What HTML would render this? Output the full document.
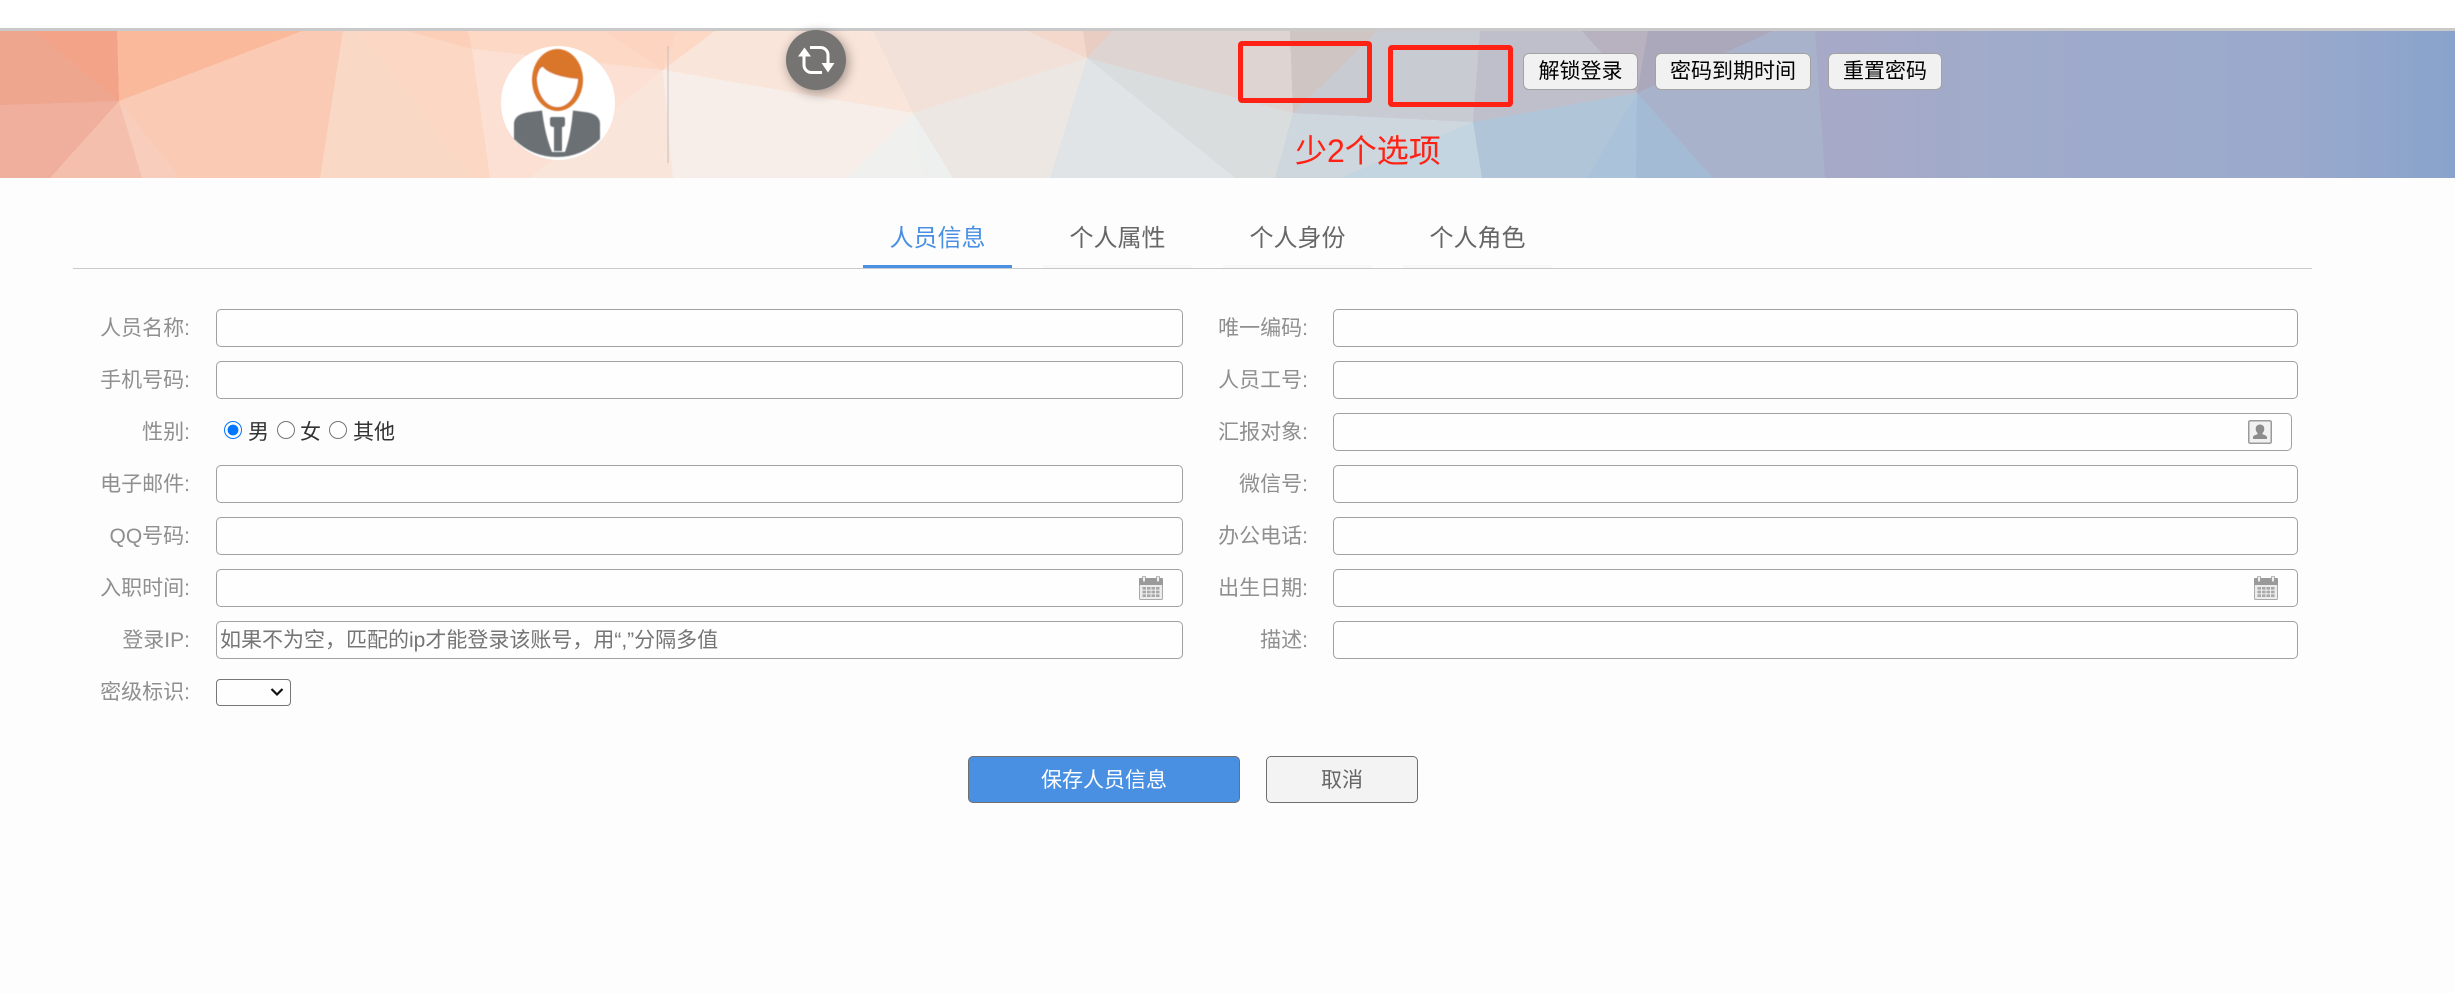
<!DOCTYPE html>
<html lang="zh-CN">
<head>
<meta charset="utf-8">
<title>人员信息</title>
<style>
html,body{margin:0;padding:0;width:2455px;height:993px;overflow:hidden;background:#fdfdfd;font-family:"Liberation Sans","Noto Sans CJK SC",sans-serif;}
*{box-sizing:border-box;}
.abs{position:absolute;}
#top{left:0;top:0;width:2455px;height:28px;background:#fff;}
#line{left:0;top:28px;width:2455px;height:3px;background:#c9c9c9;}
svg{display:block;}
.hbtn{position:absolute;top:53px;height:37px;background:#f1f1f1;border:1px solid #a3a3a3;border-radius:6px;color:#000;font:21px/35px "Liberation Sans","Noto Sans CJK SC",sans-serif;text-align:center;padding:0;}
.red{position:absolute;border:5px solid #ff2214;border-radius:4px;}
#note{left:1295px;top:129px;height:44px;line-height:44px;font-size:32px;color:#ff2214;white-space:nowrap;}
.tab{position:absolute;top:216px;width:149px;height:52px;line-height:46px;text-align:center;font-size:24px;color:#666;border-bottom:3px solid #f8f8f8;}
.tab.on{color:#4a90e2;border-bottom-color:#4a90e2;}
#rule{left:73px;top:268px;width:2239px;height:1px;background:#cacaca;}
.lb{position:absolute;height:38px;line-height:40px;font-size:21px;color:#8f8f8f;text-align:right;white-space:nowrap;}
.lb.l{left:60px;width:130px;}
.lb.r{left:1170px;width:138px;}
input.t{position:absolute;height:38px;border:1.5px solid #a0a0a0;border-radius:5px;background:#fefefe;padding:2px 3px 0;margin:0;font:21px "Liberation Sans","Noto Sans CJK SC",sans-serif;outline:none;}
input.t::placeholder{color:#757575;opacity:1;}
input.t.c1{left:216px;width:967px;}
input.t.c2{left:1333px;width:965px;}
.rd{position:absolute;top:421px;width:18px;height:18px;margin:0;}
.rt{position:absolute;top:413px;height:38px;line-height:40px;font-size:21px;color:#333;white-space:nowrap;}
select{position:absolute;left:216px;top:679px;width:75px;height:27px;margin:0;background:#fefefe;border:1.5px solid #767676;border-radius:4px;font-size:20px;appearance:none;-webkit-appearance:none;}
.btn{position:absolute;top:756px;height:47px;border-radius:5px;font:21px/47px "Liberation Sans","Noto Sans CJK SC",sans-serif;text-align:center;padding:0;border:1.5px solid #6f6f6f;}
#save{left:968px;width:272px;background:#4a90e2;color:#fff;}
#cancel{left:1266px;width:152px;background:#f3f3f3;color:#666;}
</style>
</head>
<body>
<div class="abs" id="top"></div>

<svg class="abs" style="left:0;top:31px" width="2455" height="147" viewBox="0 31 2455 147">
<defs>
<linearGradient id="g" x1="0" x2="1" y1="0" y2="0"><stop offset="0" stop-color="#a7a9c7"/><stop offset=".3" stop-color="#a0abcb"/><stop offset=".75" stop-color="#9aa9cc"/><stop offset="1" stop-color="#88a3cb"/></linearGradient>
<filter id="av" x="-5%" y="-5%" width="110%" height="110%"><feGaussianBlur stdDeviation=".5"/></filter>
</defs>
<g shape-rendering="crispEdges">
<rect x="0" y="31" width="2455" height="147" fill="#f8eee9"/>
<polygon points="0,31 33,31 119,101 0,105" fill="#eea78e"/>
<polygon points="33,31 117,31 119,101" fill="#f3a488"/>
<polygon points="117,31 302,31 119,101" fill="#fab99a"/>
<polygon points="119,101 302,31 343,31 320,178 180,178" fill="#fbcab4"/>
<polygon points="119,101 180,178 142,178" fill="#f8cdbb"/>
<polygon points="119,101 142,178 50,178" fill="#f5bfad"/>
<polygon points="0,105 119,101 50,178 0,178" fill="#f0ae9c"/>
<polygon points="343,31 360,31 473,178 320,178" fill="#f9d9c5"/>
<polygon points="360,31 407,31 472,49 490,178 473,178" fill="#fcd7c3"/>
<polygon points="407,31 468,31 472,49" fill="#fccfb9"/>
<polygon points="468,31 715,31 663,70 472,49" fill="#fdd8c4"/>
<polygon points="603,31 677,31 663,70" fill="#fdd4c0"/>
<polygon points="472,49 663,70 530,178 490,178" fill="#fbe0d3"/>
<polygon points="663,70 530,178 673,178" fill="#fae5db"/>
<polygon points="663,70 913,113 847,178 673,178" fill="#f8eee9"/>
<polygon points="663,70 715,31 873,31 913,113" fill="#fae5da"/>
<polygon points="873,31 1027,31 1087,58 913,113" fill="#f2e1d9"/>
<polygon points="1027,31 1083,31 1087,58" fill="#f3d8cb"/>
<polygon points="1083,31 1112,31 1087,58" fill="#e9cdc2"/>
<polygon points="913,113 847,178 923,178" fill="#f0f0ee"/>
<polygon points="913,113 923,178 953,178" fill="#eef0ef"/>
<polygon points="913,113 1087,58 1050,178 953,178" fill="#ece7e3"/>
<polygon points="1087,58 1235,178 1050,178" fill="#e0e4e6"/>
<polygon points="1087,58 1293,113 1275,178 1235,178" fill="#d9dddd"/>
<polygon points="1112,31 1290,31 1293,113 1087,58" fill="#ded4d1"/>
<polygon points="1290,31 1378,31 1293,113" fill="#cfc6c3"/>
<polygon points="1378,31 1480,31 1473,122 1293,113" fill="#c8cbd1"/>
<polygon points="1293,113 1473,122 1340,178 1275,178" fill="#ced6de"/>
<polygon points="1473,122 1482,178 1340,178" fill="#c2d5e1"/>
<polygon points="1480,31 1582,31 1637,93 1473,122" fill="#bfbfcb"/>
<polygon points="1582,31 1648,31 1637,93" fill="#b8b2c0"/>
<polygon points="1648,31 1773,31 1637,93" fill="#aca8bc"/>
<polygon points="1473,122 1637,93 1587,178 1482,178" fill="#b1c5d8"/>
<polygon points="1637,93 1636,178 1587,178" fill="#aac2da"/>
<polygon points="1637,93 1713,178 1636,178" fill="#a4bbd5"/>
<polygon points="1773,31 1815,31 1825,178 1713,178 1637,93" fill="#a8b2cb"/>
<polygon points="1815,31 2455,31 2455,178 1825,178" fill="url(#g)"/>
</g>
<line x1="668" y1="46" x2="668" y2="163" stroke="#c4c0bd" stroke-width="1"/>
<!-- avatar -->
<circle cx="558" cy="103" r="57" fill="#fff"/>
<g filter="url(#av)">
<path d="M514 124 Q514 115 527 112.500 L542 110.500 Q545 135 552 152 L565 152 Q571 135 573 110.500 L588 112.500 Q600 115 600 124 V139 Q582 157 557 157 Q532 157 514 139 Z" fill="#6b7073"/>
<path d="M550 119 Q550 117 552 117 H563 Q565 117 565 119 V124 Q565 127 562 127 L562 151 H554 L554 127 Q550 127 550 124 Z" fill="#6b7073"/>
<ellipse cx="557.500" cy="80" rx="25.500" ry="31" fill="#da7629"/>
<path d="M537 78 C538 72 540 67 543 67 C548 74 565 78 578 79 C577 96 568 107 557.500 107 C546 107 537 94 537 78Z" fill="#fff"/>
</g>
</svg>

<div class="abs" id="line"></div>

<!-- refresh button -->
<svg class="abs" style="left:766px;top:0;overflow:visible" width="100" height="120" viewBox="766 0 100 120">
<defs><filter id="s" x="-50%" y="-50%" width="200%" height="200%"><feGaussianBlur stdDeviation="6"/></filter></defs>
<circle cx="818" cy="63" r="30" fill="#000" opacity=".38" filter="url(#s)"/>
<circle cx="816" cy="60" r="30" fill="#767472"/>
<path d="M804 56 V65 a7.500 7.500 0 0 0 7.500 7.500 H822" fill="none" stroke="#fff" stroke-width="3"/>
<polygon points="798,56.500 804.500,47.500 811,56.500" fill="#fff"/>
<path d="M828 63 V55 a7.500 7.500 0 0 0 -7.500 -7.500 H810" fill="none" stroke="#fff" stroke-width="3"/>
<polygon points="821.500,63 834.500,63 828,72.500" fill="#fff"/>
</svg>

<div class="red" style="left:1238px;top:41px;width:134px;height:62px"></div>
<div class="red" style="left:1388px;top:45px;width:125px;height:62px"></div>
<button class="hbtn" style="left:1523px;width:115px">解锁登录</button>
<button class="hbtn" style="left:1655px;width:156px">密码到期时间</button>
<button class="hbtn" style="left:1828px;width:114px">重置密码</button>
<div class="abs" id="note">少2个选项</div>

<div class="tab on" style="left:863px">人员信息</div>
<div class="tab" style="left:1043px">个人属性</div>
<div class="tab" style="left:1223px">个人身份</div>
<div class="tab" style="left:1403px">个人角色</div>
<div class="abs" id="rule"></div>

<!-- left column -->
<div class="lb l" style="top:309px">人员名称:</div><input class="t c1" style="top:309px">
<div class="lb l" style="top:361px">手机号码:</div><input class="t c1" style="top:361px">
<div class="lb l" style="top:413px">性别:</div>
<input class="rd" type="radio" name="sex" checked style="left:224px">
<span class="rt" style="left:248px">男</span>
<input class="rd" type="radio" name="sex" style="left:277px">
<span class="rt" style="left:300px">女</span>
<input class="rd" type="radio" name="sex" style="left:329px">
<span class="rt" style="left:353px">其他</span>
<div class="lb l" style="top:465px">电子邮件:</div><input class="t c1" style="top:465px">
<div class="lb l" style="top:517px">QQ号码:</div><input class="t c1" style="top:517px">
<div class="lb l" style="top:569px">入职时间:</div><input class="t c1" style="top:569px">
<div class="lb l" style="top:621px">登录IP:</div><input class="t c1" style="top:621px" placeholder="如果不为空，匹配的ip才能登录该账号，用“,”分隔多值">
<div class="lb l" style="top:673px">密级标识:</div><select><option></option></select>
<svg class="abs" style="left:270px;top:686px" width="14" height="12" viewBox="0 0 14 12"><path d="M1.500 3 L7 8.500 L12.500 3" fill="none" stroke="#111" stroke-width="2.200"/></svg>

<!-- right column -->
<div class="lb r" style="top:309px">唯一编码:</div><input class="t c2" style="top:309px">
<div class="lb r" style="top:361px">人员工号:</div><input class="t c2" style="top:361px">
<div class="lb r" style="top:413px">汇报对象:</div><input class="t c2" style="top:413px;width:959px">
<div class="lb r" style="top:465px">微信号:</div><input class="t c2" style="top:465px">
<div class="lb r" style="top:517px">办公电话:</div><input class="t c2" style="top:517px">
<div class="lb r" style="top:569px">出生日期:</div><input class="t c2" style="top:569px">
<div class="lb r" style="top:621px">描述:</div><input class="t c2" style="top:621px">

<!-- user icon -->
<svg class="abs" style="left:2248px;top:420px" width="24" height="24" viewBox="0 0 24 24">
<rect x=".75" y=".75" width="22.500" height="22.500" rx="1.500" fill="#f1f1f1" stroke="#9a9a9a" stroke-width="1.500"/>
<path d="M12 4.500c2.800 0 4.300 2 4.300 4.300 0 1.800-.8 3.400-1.800 4.200v1.300c2.200.7 4.300 1.500 4.500 2.700V19H5v-2c.2-1.200 2.300-2 4.500-2.700V13c-1-.8-1.800-2.400-1.800-4.200 0-2.300 1.500-4.300 4.300-4.300z" fill="#8c8c8c"/>
</svg>

<!-- calendar icons -->
<svg class="abs" style="left:1139px;top:576px" width="24" height="24" viewBox="0 0 24 24">
<rect x=".5" y="2.500" width="23" height="21" rx="1" fill="#ececec" stroke="#aaa"/>
<path d="M0 3q0-1 1-1h22q1 0 1 1v6H0z" fill="#9a9a9a"/>
<rect x="3.500" y="0" width="3" height="6" rx="1.500" fill="#eee" stroke="#9a9a9a" stroke-width=".8"/><rect x="17.500" y="0" width="3" height="6" rx="1.500" fill="#eee" stroke="#9a9a9a" stroke-width=".8"/>
<g fill="#a8a8a8"><rect x="3.500" y="11" width="3.500" height="2.600"/><rect x="8" y="11" width="3.500" height="2.600"/><rect x="12.500" y="11" width="3.500" height="2.600"/><rect x="17" y="11" width="3.500" height="2.600"/><rect x="3.500" y="14.700" width="3.500" height="2.600"/><rect x="8" y="14.700" width="3.500" height="2.600"/><rect x="12.500" y="14.700" width="3.500" height="2.600"/><rect x="17" y="14.700" width="3.500" height="2.600"/><rect x="3.500" y="18.400" width="3.500" height="2.600"/><rect x="8" y="18.400" width="3.500" height="2.600"/><rect x="12.500" y="18.400" width="3.500" height="2.600"/><rect x="17" y="18.400" width="3.500" height="2.600"/></g>
</svg>
<svg class="abs" style="left:2254px;top:576px" width="24" height="24" viewBox="0 0 24 24">
<rect x=".5" y="2.500" width="23" height="21" rx="1" fill="#ececec" stroke="#aaa"/>
<path d="M0 3q0-1 1-1h22q1 0 1 1v6H0z" fill="#9a9a9a"/>
<rect x="3.500" y="0" width="3" height="6" rx="1.500" fill="#eee" stroke="#9a9a9a" stroke-width=".8"/><rect x="17.500" y="0" width="3" height="6" rx="1.500" fill="#eee" stroke="#9a9a9a" stroke-width=".8"/>
<g fill="#a8a8a8"><rect x="3.500" y="11" width="3.500" height="2.600"/><rect x="8" y="11" width="3.500" height="2.600"/><rect x="12.500" y="11" width="3.500" height="2.600"/><rect x="17" y="11" width="3.500" height="2.600"/><rect x="3.500" y="14.700" width="3.500" height="2.600"/><rect x="8" y="14.700" width="3.500" height="2.600"/><rect x="12.500" y="14.700" width="3.500" height="2.600"/><rect x="17" y="14.700" width="3.500" height="2.600"/><rect x="3.500" y="18.400" width="3.500" height="2.600"/><rect x="8" y="18.400" width="3.500" height="2.600"/><rect x="12.500" y="18.400" width="3.500" height="2.600"/><rect x="17" y="18.400" width="3.500" height="2.600"/></g>
</svg>

<button class="btn" id="save">保存人员信息</button>
<button class="btn" id="cancel">取消</button>
</body>
</html>
